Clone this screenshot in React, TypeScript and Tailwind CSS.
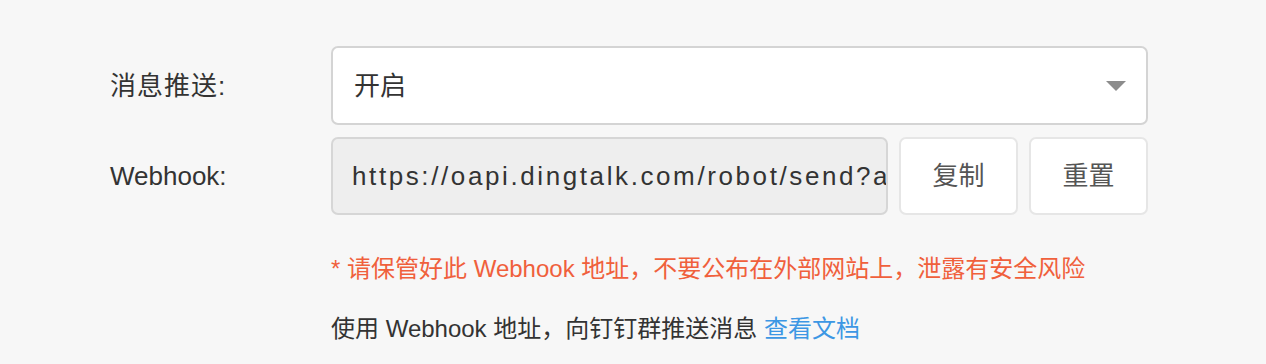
const font = { fontFamily: '"Liberation Sans", "Noto Sans CJK SC", sans-serif' }

export default function App() {
  return (
    <div className="min-h-[364px] w-full bg-[#f7f7f7] pt-[46px] pl-[110px] text-[#333]" style={font}>
      {/* 消息推送 */}
      <div className="flex items-center">
        <div className="w-[221px] text-[26px] leading-none tracking-[1px]">消息推送:</div>
        <div className="flex h-[79px] w-[817px] items-center justify-between rounded-[7px] border-2 border-[#d4d4d4] bg-white pl-[21px] pr-[20px]">
          <span className="text-[26px] leading-none">开启</span>
          <svg width="20" height="10" viewBox="0 0 20 10">
            <path d="M0 0 L20 0 L10 10 Z" fill="#8c8c8c" />
          </svg>
        </div>
      </div>

      {/* Webhook */}
      <div className="mt-[12px] flex items-center">
        <div className="w-[221px] text-[26px] leading-none">Webhook:</div>
        <div className="flex w-[817px] gap-[11px]">
          <input
            readOnly
            value="https://oapi.dingtalk.com/robot/send?access_token=6c2a1b9f0e"
            className="h-[78px] w-[557px] rounded-[7px] border-2 border-[#d6d6d6] bg-[#eeeeee] pl-[19px] text-[26px] tracking-[2.6px] text-[#333] outline-none"
            style={font}
          />
          <button className="h-[78px] w-[119px] rounded-[7px] border-2 border-[#e6e6e6] bg-white text-[26px] text-[#555]">
            复制
          </button>
          <button className="h-[78px] w-[119px] rounded-[7px] border-2 border-[#e6e6e6] bg-white text-[26px] text-[#555]">
            重置
          </button>
        </div>
      </div>

      <div className="pl-[221px]">
        <p className="mt-[36px] text-[24px] leading-[36px] text-[#f0603c]">
          * 请保管好此 Webhook 地址，不要公布在外部网站上，泄露有安全风险
        </p>
        <p className="mt-[24px] text-[24px] leading-[36px] text-[#333]">
          使用 Webhook 地址，向钉钉群推送消息 <a className="text-[#3d97e4]">查看文档</a>
        </p>
      </div>
    </div>
  )
}
